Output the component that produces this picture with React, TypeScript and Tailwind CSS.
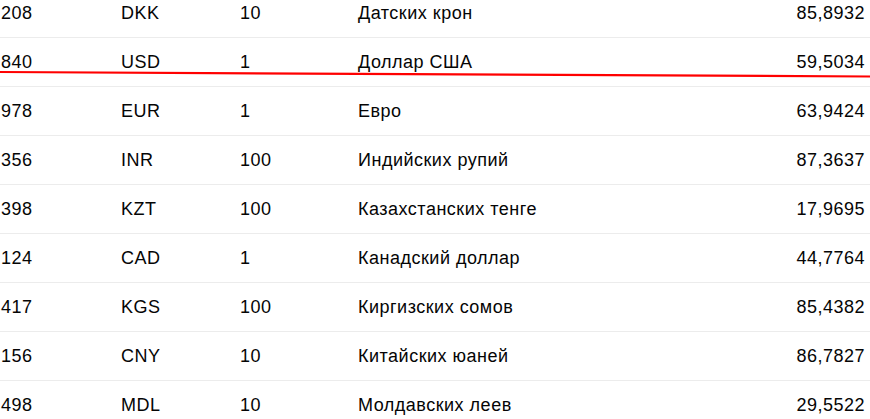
const rates = [
  { code: "208", letter: "DKK", unit: "10", name: "Датских крон", rate: "85,8932" },
  { code: "840", letter: "USD", unit: "1", name: "Доллар США", rate: "59,5034" },
  { code: "978", letter: "EUR", unit: "1", name: "Евро", rate: "63,9424" },
  { code: "356", letter: "INR", unit: "100", name: "Индийских рупий", rate: "87,3637" },
  { code: "398", letter: "KZT", unit: "100", name: "Казахстанских тенге", rate: "17,9695" },
  { code: "124", letter: "CAD", unit: "1", name: "Канадский доллар", rate: "44,7764" },
  { code: "417", letter: "KGS", unit: "100", name: "Киргизских сомов", rate: "85,4382" },
  { code: "156", letter: "CNY", unit: "10", name: "Китайских юаней", rate: "86,7827" },
  { code: "498", letter: "MDL", unit: "10", name: "Молдавских леев", rate: "29,5522" },
];

export default function App() {
  return (
    <div className="relative h-[419px] w-[870px] overflow-hidden bg-white font-['Liberation_Sans',Arial,sans-serif] text-[18px] tracking-[0.5px] text-[#050505]">
      <div className="-mt-[11px]">
        {rates.map((r) => (
          <div
            key={r.code}
            className="grid h-[49px] grid-cols-[120px_119px_118px_1fr_auto] items-center border-b border-[#ececec] pl-px pr-[5px]"
          >
            <span>{r.code}</span>
            <span>{r.letter}</span>
            <span>{r.unit}</span>
            <span>{r.name}</span>
            <span className="text-right">{r.rate}</span>
          </div>
        ))}
      </div>
      {/* красная отметка под строкой USD */}
      <svg
        className="pointer-events-none absolute left-0 top-0"
        width="870"
        height="419"
        viewBox="0 0 870 419"
      >
        <path
          d="M0 72 C 200 72.5, 500 74, 870 76.5"
          fill="none"
          stroke="#ff0000"
          strokeWidth="2.2"
        />
      </svg>
    </div>
  );
}
